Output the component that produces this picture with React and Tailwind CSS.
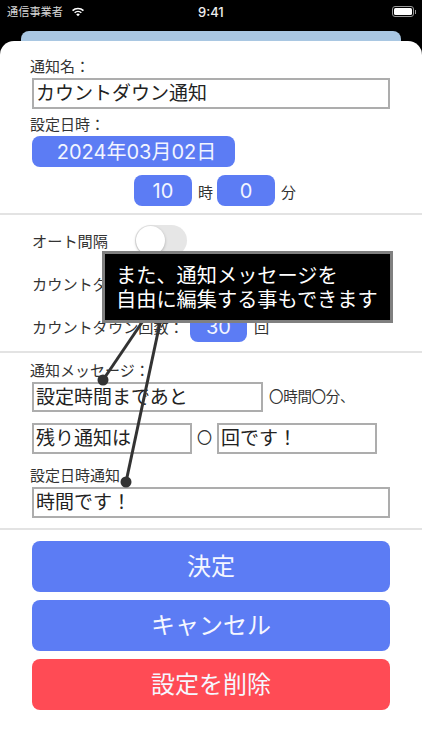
import React from "react";

const FONT = { fontFamily: '"Inter", "Noto Sans CJK JP", sans-serif' };

function Field({ className, children }) {
  return (
    <div className={`flex items-center border-2 border-[#adadad] bg-white pl-[2px] text-[19px] leading-none text-[#222] ${className}`}>
      {children}
    </div>
  );
}

function Pill({ className, children }) {
  return (
    <div className={`flex items-center justify-center rounded-[8px] bg-[#5c7cf4] text-[20px] leading-none text-[#f2f5ff] ${className}`}>
      {children}
    </div>
  );
}

function ActionButton({ className, children }) {
  return (
    <button className={`flex h-[51px] w-[358px] items-center justify-center rounded-[8px] text-[24px] leading-none text-[#f5f7ff] ${className}`}>
      {children}
    </button>
  );
}

function Divider({ className }) {
  return <div className={`h-[2px] w-full bg-[#e3e3e3] ${className}`} />;
}

export default function App() {
  return (
    <div style={FONT} className="relative h-[750px] w-[422px] overflow-hidden bg-black">
      {/* status bar */}
      <div className="relative flex h-[31px] items-start pl-[7px] pt-[4px] text-white">
        <span className="w-[56px] whitespace-nowrap text-[11.2px] leading-[16px] text-[#d8d8d8]">通信事業者</span>
        <svg className="ml-[9px] mt-[3px]" width="12" height="10" viewBox="0 0 14 11" fill="#fff">
          <path d="M7 10.6 4.9 8.3a3 3 0 0 1 4.2 0z" />
          <path d="M3.7 7.1 2.5 5.8a6.4 6.4 0 0 1 9 0l-1.2 1.3a4.7 4.7 0 0 0-6.6 0z" />
          <path d="M1.3 4.6 0 3.3a9.9 9.9 0 0 1 14 0l-1.3 1.3a8.1 8.1 0 0 0-11.4 0z" />
        </svg>
        <span className="ml-[114px] w-[26px] text-[13px] font-medium leading-[16px] text-[#eee]">9:41</span>
        <div className="ml-[168px] mt-[2px] flex items-center">
          <div className="h-[11px] w-[22px] rounded-[3px] border border-[#999] p-[1px]">
            <div className="h-full w-full rounded-[1.5px] bg-white" />
          </div>
          <div className="ml-[1px] h-[4px] w-[1px] bg-[#999]" />
        </div>
      </div>
      <div className="mx-[21px] h-[10px] rounded-t-[8px] bg-[#a9c7e2]" />

      {/* sheet */}
      <div className="h-[709px] rounded-t-[14px] bg-white text-[#333]">
        <div className="px-[32px] pt-[15px]">
          <div className="-ml-[2px] h-[22px] text-[15px] leading-[22px]">通知名：</div>
          <Field className="h-[31px] w-[358px]">カウントダウン通知</Field>
          <div className="-ml-[2px] mt-[5px] h-[22px] text-[15px] leading-[22px]">設定日時：</div>
          <Pill className="h-[31px] w-[203px] pl-[6px]">2024年03月02日</Pill>
          <div className="mt-[8px] flex h-[31px] items-center pl-[102px] text-[15px]">
            <Pill className="h-[31px] w-[58px]">10</Pill>
            <span className="ml-[6px] w-[19px] pt-[5px]">時</span>
            <Pill className="h-[31px] w-[58px]">0</Pill>
            <span className="ml-[6px] pt-[5px]">分</span>
          </div>
        </div>
        <Divider className="mt-[7px]" />

        <div className="px-[32px] text-[15.2px]">
          <div className="mt-[10px] flex h-[31px] items-center">
            <span className="w-[103px] pt-[4px]">オート間隔</span>
            <div className="h-[31px] w-[52px] rounded-full bg-[#e6e6e6] p-[1px]">
              <div className="h-[29px] w-[29px] rounded-full bg-white shadow-[0_1px_3px_rgba(0,0,0,0.25)]" />
            </div>
          </div>
          <div className="mt-[12px] flex h-[31px] items-center">
            <span className="w-[158px] pt-[4px]">カウントダウン間隔：</span>
            <Pill className="h-[31px] w-[57px]" />
          </div>
          <div className="mt-[12px] flex h-[31px] items-center">
            <span className="w-[158px] pt-[4px]">カウントダウン回数：</span>
            <Pill className="h-[31px] w-[57px]">30</Pill>
            <span className="ml-[7px] pt-[4px]">回</span>
          </div>
        </div>
        <Divider className="mt-[9px] h-[1px] bg-[#d8d8d8]" />

        <div className="px-[32px]">
          <div className="-ml-[2px] mt-[6px] h-[23px] text-[15px] leading-[23px]">通知メッセージ：</div>
          <div className="flex h-[30px] items-center">
            <Field className="h-[30px] w-[231px]">設定時間まであと</Field>
            <span className="ml-[6px] text-[14.5px] tracking-[-0.3px]">〇時間〇分、</span>
          </div>
          <div className="mt-[11px] flex h-[31px] items-center">
            <Field className="h-[31px] w-[160px]">残り通知は</Field>
            <span className="w-[25px] text-center text-[15px]">〇</span>
            <Field className="h-[31px] w-[160px]">回です！</Field>
          </div>
          <div className="-ml-[2px] mt-[11px] h-[22px] text-[15px] leading-[22px]">設定日時通知</div>
          <Field className="h-[31px] w-[358px]">時間です！</Field>
        </div>
        <Divider className="mt-[10px] h-[1px] bg-[#d8d8d8]" />

        <div className="flex flex-col gap-[8px] px-[32px] pt-[11px]">
          <ActionButton className="bg-[#5c7cf4]">決定</ActionButton>
          <ActionButton className="bg-[#5c7cf4]">キャンセル</ActionButton>
          <ActionButton className="bg-[#ff4b55]">設定を削除</ActionButton>
        </div>
      </div>

      {/* callout leader lines */}
      <svg className="absolute left-0 top-0" width="422" height="750" viewBox="0 0 422 750" fill="none">
        <path d="M145 318 103 380" stroke="#333" strokeWidth="3" />
        <circle cx="103" cy="380" r="5.5" fill="#333" />
        <path d="M161 318 126 482" stroke="#333" strokeWidth="3" />
        <circle cx="126" cy="482" r="5.5" fill="#333" />
      </svg>

      {/* callout */}
      <div className="absolute left-[102px] top-[251px] flex h-[72px] w-[291px] flex-col justify-center border-[3px] border-[#808080] bg-black pl-[11px] pt-[2px] text-[20.2px] leading-[24px] text-white">
        <div>また、通知メッセージを</div>
        <div>自由に編集する事もできます</div>
      </div>
    </div>
  );
}
